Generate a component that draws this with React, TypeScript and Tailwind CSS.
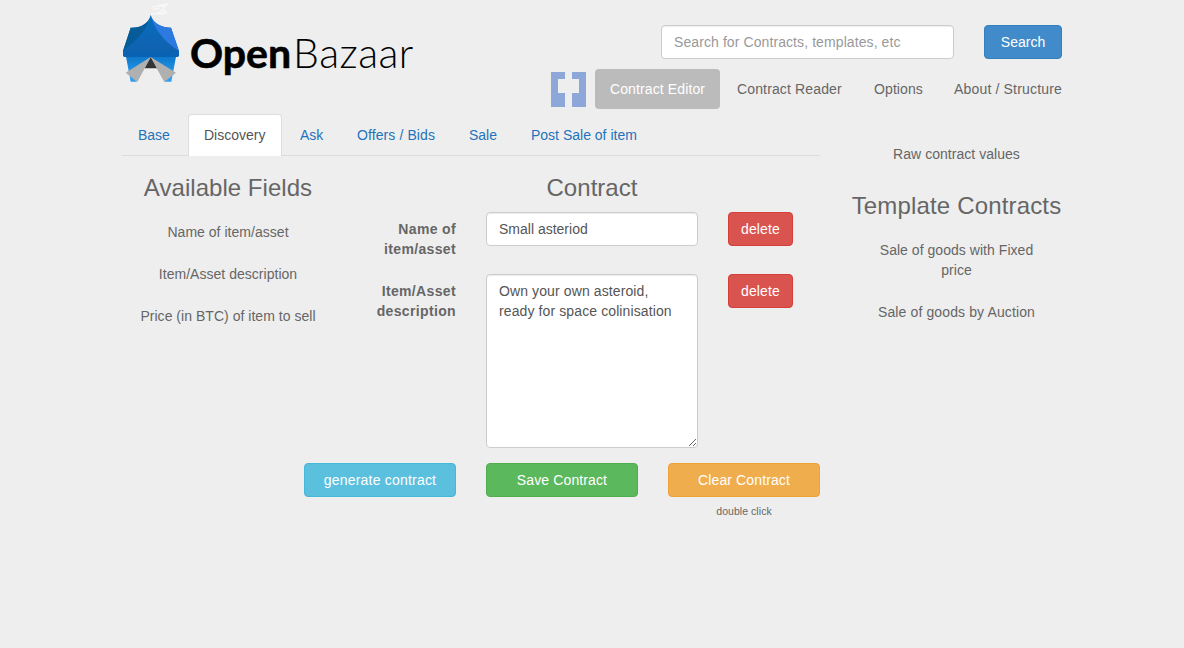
import React from "react";

const cx = (...parts: string[]) => parts.join(" ");

function TentLogo() {
  return (
    <svg width="60" height="84" viewBox="36 0 180 252" className="shrink-0">
      <defs>
        <linearGradient id="roof" x1="0" y1="0" x2="0" y2="1">
          <stop offset="0" stopColor="#066fbe" />
          <stop offset="1" stopColor="#115fae" />
        </linearGradient>
        <linearGradient id="side" x1="0" y1="0" x2="0" y2="1">
          <stop offset="0" stopColor="#0b74c6" />
          <stop offset="0.8" stopColor="#2a9df0" />
          <stop offset="1" stopColor="#2f9ff2" />
        </linearGradient>
      </defs>
      <path d="M125 20 C136 23 145 14 157 15 L173 12 L158 25 L171 38 C158 44 150 35 141 37 M124 44 C135 37 148 43 161 42 M130 28 L149 24 M146 17 L166 19 M150 32 L163 34" fill="none" stroke="#fff" strokeWidth="2.4" />
      <path d="M47 164 H199 L184 245 H62 Z" fill="url(#side)" />
      <path d="M122 45 C116 72 91 84 62 83 L39 153 L44 171 H202 L207 153 L183 83 C157 83 130 73 122 45 Z" fill="url(#roof)" />
      <path d="M122 45 C116 72 91 84 62 83 L39 153 C80 121 111 92 122 45 Z" fill="#065c98" />
      <path d="M122 45 C134 92 164 125 207 153 L183 83 C157 83 130 73 122 45 Z" fill="#2c79df" />
      <path d="M39 153 H207 V166 Q207 171 202 171 H44 Q39 171 39 166 Z" fill="#0963b2" />
      <path d="M122 171 L76 252 H168 Z" fill="#eee" />
      <path d="M122 171 L104 205 H142 Z" fill="#333" />
      <path d="M122 171 L47 218 L82 246 Z" fill="#b0b0b0" />
      <path d="M122 171 L198 218 L163 246 Z" fill="#b0b0b0" />
    </svg>
  );
}

function BracketIcon() {
  return (
    <svg width="35" height="35" viewBox="0 0 35 35" fill="#8da7d8" className="mr-[9px]" shapeRendering="crispEdges">
      <path d="M0 0H14V7H7V21H14V35H0Z" />
      <path d="M35 0H21V7H28V21H21V35H35Z" />
    </svg>
  );
}

const BTN = "h-[34px] rounded-[4px] border text-white text-center";
const INPUT =
  "block rounded-[4px] border border-[#ccc] bg-white px-3 py-1.5 text-[#555] shadow-[inset_0_1px_1px_rgba(0,0,0,0.075)] outline-none";

const tabs = [
  { name: "Base", width: "w-[64px]" },
  { name: "Discovery", width: "w-[94px]" },
  { name: "Ask", width: "w-[55px]" },
  { name: "Offers / Bids", width: "w-[110px] tracking-[0.1px]" },
  { name: "Sale", width: "w-[60px]" },
  { name: "Post Sale of item", width: "w-[138px]" },
];

const fields = ["Name of item/asset", "Item/Asset description", "Price (in BTC) of item to sell"];

export default function App() {
  return (
    <div className="h-[648px] overflow-hidden bg-[#eee] pl-[122px] font-['Liberation_Sans',Arial,sans-serif] text-[14px] leading-[20px] text-[#666]">
      <div className="w-[940px]">
        <header className="flex h-[109px] justify-between">
          <div className="flex">
            <TentLogo />
            <h1 className="ml-[8px] mt-[28px] whitespace-nowrap font-[Lato,sans-serif] text-[41px] leading-[50px] text-black">
              <span className="font-bold [-webkit-text-stroke:0.6px_black]">Open</span>
              <span className="ml-[2px] font-light tracking-[0.5px]">Bazaar</span>
            </h1>
          </div>
          <div className="flex flex-col items-end pt-[25px]">
            <div className="flex gap-[30px]">
              <input className={cx(INPUT, "h-[34px] w-[293px] tracking-[0.09px] placeholder:text-[#999]")} placeholder="Search for Contracts, templates, etc" />
              <button className={cx(BTN, "w-[78px] border-[#357ebd] bg-[#428bca]")}>Search</button>
            </div>
            <nav className="mt-[10px] flex items-center whitespace-nowrap">
              <BracketIcon />
              <a className="w-[125px] rounded-[4px] bg-[#bbb] py-[10px] text-center tracking-[0.12px] text-white">Contract Editor</a>
              <a className="ml-[17px] w-[105px] tracking-[0.14px]">Contract Reader</a>
              <a className="ml-8 w-[49px] tracking-[0.1px]">Options</a>
              <a className="ml-[31px] w-[108px] tracking-[0.17px]">About / Structure</a>
            </nav>
          </div>
        </header>

        <div className="flex gap-[30px]">
          <main className="w-[698px] shrink-0 pt-[5px]">
            <nav className="flex h-[42px] gap-[2px] whitespace-nowrap border-b border-[#ddd]">
              {tabs.map((t) => (
                <a
                  key={t.name}
                  className={cx(
                    t.width,
                    t.name === "Discovery"
                      ? "h-[42px] rounded-t-[4px] border border-b-0 border-[#ddd] bg-white px-[15px] py-[10px] text-[#555]"
                      : "border border-transparent px-[15px] py-[10px] text-[#1f73bb]",
                  )}
                >
                  {t.name}
                </a>
              ))}
            </nav>
            <div className="flex pt-[19px]">
              <section className="w-[212px] text-center">
                <h3 className="text-[24px] leading-[26px] tracking-[0.04px]">Available Fields</h3>
                <ul className="mt-[21px] flex flex-col gap-[22px] tracking-[0.03px]">
                  {fields.map((f) => (
                    <li key={f}>{f}</li>
                  ))}
                </ul>
              </section>
              <section className="flex-1">
                <h3 className="ml-[152px] w-[212px] text-center text-[24px] leading-[26px] tracking-[0.04px]">Contract</h3>
                <div className="mt-[11px] flex items-start">
                  <label className="mr-[30px] w-[122px] pt-[7px] text-right font-bold tracking-[0.35px]">
                    Name of
                    <br />
                    item/asset
                  </label>
                  <input className={cx(INPUT, "h-[34px] w-[212px]")} defaultValue="Small asteriod" />
                  <button className={cx(BTN, "ml-[30px] w-[65px] border-[#d43f3a] bg-[#d9534f] tracking-[0.15px]")}>delete</button>
                </div>
                <div className="mt-[15px] flex items-start">
                  <label className="mr-[30px] w-[122px] pt-[7px] text-right font-bold tracking-[0.35px]">
                    Item/Asset
                    <br />
                    description
                  </label>
                  <textarea
                    className={cx(INPUT, "h-[174px] w-[212px] resize tracking-[0.11px]")}
                    defaultValue={"Own your own asteroid,\nready for space colinisation"}
                  />
                  <button className={cx(BTN, "ml-[30px] w-[65px] border-[#d43f3a] bg-[#d9534f] tracking-[0.15px]")}>delete</button>
                </div>
              </section>
            </div>
            <div className="mt-[15px] flex justify-end gap-[30px]">
              <button className={cx(BTN, "w-[152px] border-[#46b8da] bg-[#5bc0de] tracking-[0.2px]")}>generate contract</button>
              <button className={cx(BTN, "w-[152px] border-[#4cae4c] bg-[#5cb85c] tracking-[0.12px]")}>Save Contract</button>
              <div className="w-[152px] text-center">
                <button className={cx(BTN, "w-full border-[#eea236] bg-[#f0ad4e] tracking-[0.12px]")}>Clear Contract</button>
                <p className="mt-[4px] text-[10.5px] leading-[20px] tracking-[0.05px]">double click</p>
              </div>
            </div>
          </main>

          <aside className="w-[212px] shrink-0 pl-[1px] pt-[35px] text-center tracking-[0.04px]">
            <p>Raw contract values</p>
            <h3 className="mt-[29px] whitespace-nowrap text-[24px] leading-[26px] tracking-[0.16px]">Template Contracts</h3>
            <p className="mt-[21px]">
              Sale of goods with Fixed
              <br />
              price
            </p>
            <p className="mt-[22px] tracking-[0.12px]">Sale of goods by Auction</p>
          </aside>
        </div>
      </div>
    </div>
  );
}
